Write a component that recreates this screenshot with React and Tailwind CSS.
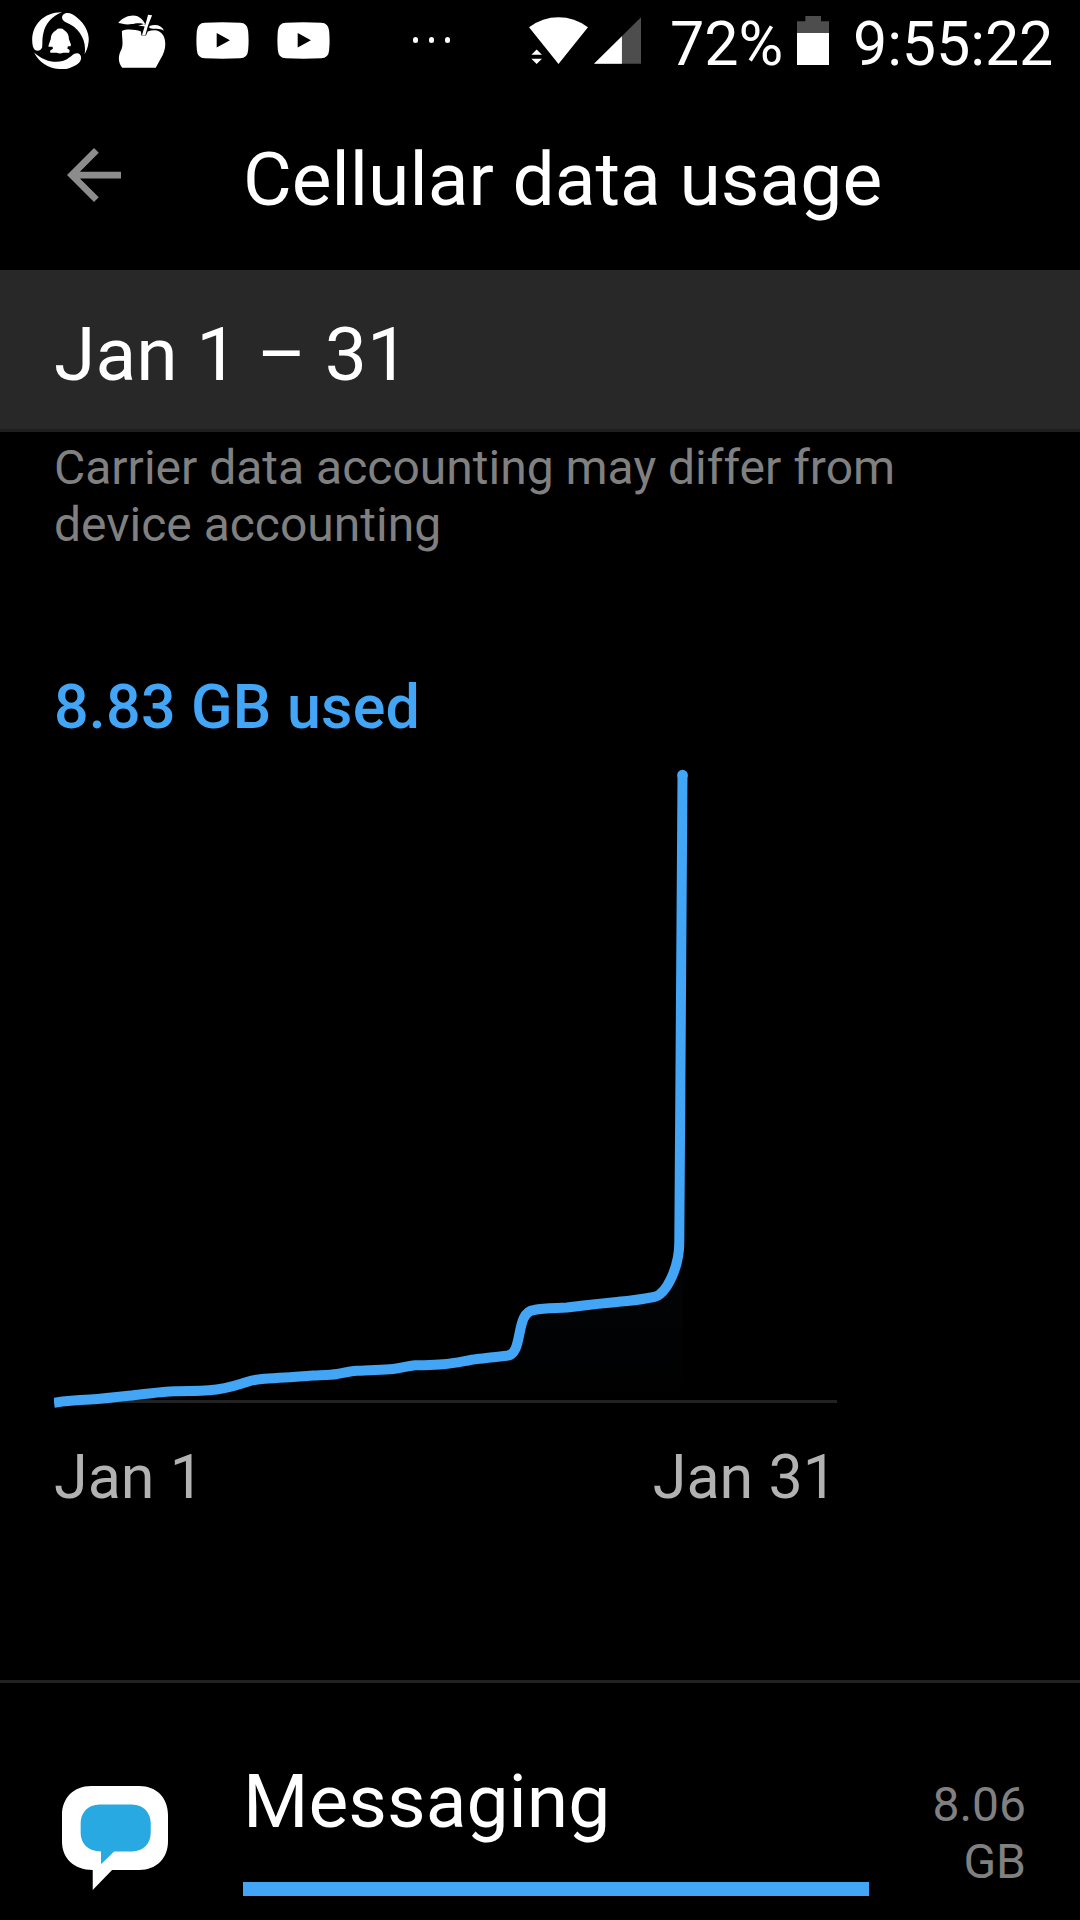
import clsx from 'clsx'

const APPS = [
  { name: 'Messaging', amount: '8.06', unit: 'GB', percent: 100 },
]

const LINE =
  'M54 1402.7 C65 1401 78 1400 90 1399.5 C107 1398.5 122 1396.5 140 1394.5 S162 1391.8 175 1391.3 S197 1391.3 209 1390.3 ' +
  'C221 1389.5 231 1387 242 1383.5 S252 1379.8 262 1379 S295 1377 313 1375.5 C325 1375 331 1375 337 1374 ' +
  'C345 1372.5 350 1371.3 357 1370.8 C370 1369.8 382 1370 393 1369 C402 1368 406 1366.2 415 1365.3 C424 1365 433 1365.3 443 1364.3 ' +
  'C455 1363.3 465 1360.8 477 1359 C487 1358 497 1356.6 507 1355.7 C524 1354.5 514.5 1312 534 1310 ' +
  'C545 1308 556 1308.3 567 1307.5 C587 1304.5 607 1303 627 1301 C636 1300 645 1298.8 654 1297 C666 1294.5 679.3 1268 679.3 1242 L682.5 775'

function RingBellIcon({ className }) {
  return (
    <svg viewBox="96 35 171 172" className={className} fill="currentColor">
      <path d="M186 36C133 35 97 72 96 118C96 134 99 145 104 149C111 155 123 151 126 142C128 131 125 119 130 98C136 70 156 47 186 36Z" />
      <path d="M191 42C202 33 218 40 232 52C259 74 270 104 266 127C264 142 260 153 254 162C262 122 238 82 199 67C186 62 182 50 191 42Z" />
      <path d="M102 157C124 178 158 191 188 183C205 178 213 168 222 162C236 154 247 166 243 178C240 191 222 200 202 206C160 213 119 193 102 157Z" />
      <path d="M169 89Q171 85 180 85Q190 85 192 89C202 95 207 104 207 117L213 133L212 138H204L202 145L209 150L208 158H190Q180 162 170 158H151L150 152L159 145L157 140H145L146 134L152 117C152 104 158 95 169 89Z" />
    </svg>
  )
}

function AppleIcon({ className }) {
  return (
    <svg viewBox="355 42 142 161" className={className} fill="currentColor">
      <path d="M355 69C372 48 403 40 420 53C428 59 433 65 436 74C420 66 407 70 395 72C378 75 365 70 355 69Z" />
      <path d="M444 44L456 46C452 58 446 70 442 83L436 105L426 105C431 87 439 67 444 44Z" />
      <path d="M432 72L441 82C430 77 422 78 414 78Z" />
      <path d="M448 78C467 71 485 76 492 92C477 84 463 89 448 84Z" />
      <path d="M366 93C380 86 404 88 423 94L424 106H438L443 94C465 86 482 91 490 107C499 127 497 151 482 175L467 202H367C353 184 355 165 365 147C371 131 366 114 366 93Z" />
    </svg>
  )
}

function VideoIcon({ className }) {
  return (
    <svg viewBox="588 65 159 112" className={className}>
      <path fill="#fff" d="M614 67Q667 64 721 67Q743 68 745 91Q748 121 745 151Q743 174 721 175Q667 178 614 175Q592 174 590 151Q587 121 590 91Q592 68 614 67Z" />
      <path d="M650 98L690 120L650 142Z" />
    </svg>
  )
}

function WifiIcon({ className }) {
  return (
    <svg viewBox="447 51 178 142" className={className} fill="currentColor">
      <path d="M447 82Q488 52 536 52Q584 52 625 82L536 193Z" />
      <path d="M454 165L470 149L486 165Z M454 177H486L470 193Z" />
    </svg>
  )
}

function SignalIcon({ className }) {
  return (
    <svg viewBox="641 50 143 142" className={className}>
      <path fill="#4d4d4d" d="M784 50V192H641Z" />
      <path fill="#fff" d="M726 108V192H641Z" />
    </svg>
  )
}

function BatteryIcon({ className }) {
  return (
    <svg viewBox="471 48 96 147" className={className}>
      <path fill="#4d4d4d" d="M496 48H543V64H567V100H471V64H496Z" />
      <path fill="#fff" d="M471 99H567V195H471Z" />
    </svg>
  )
}

function BackIcon({ className }) {
  return (
    <svg viewBox="4 4 16 16" className={className} fill="currentColor">
      <path d="M20 11H7.83l5.59-5.59L12 4l-8 8 8 8 1.41-1.41L7.83 13H20v-2z" />
    </svg>
  )
}

function MessagingIcon({ className }) {
  return (
    <svg viewBox="181 379 307 311" preserveAspectRatio="none" className={className}>
      <path fill="#fff" d="M265 379H405C455 379 488 415 488 465V545C488 595 455 630 405 630H326L270 690V630C215 630 181 595 181 545V465C181 415 215 379 265 379Z" />
      <path fill="#29a9e1" d="M290 434H383C418 434 438 460 438 490V519C438 550 418 575 383 575H332L294 613V575C255 575 235 550 235 519V490C235 460 255 434 290 434Z" />
    </svg>
  )
}

function StatusBar() {
  return (
    <div className="flex h-[88px] text-[61px] leading-[88px]">
      <RingBellIcon className="ml-8 mt-3 h-[57px] w-[57px] shrink-0" />
      <AppleIcon className="ml-[29px] mt-[14px] h-[54px] w-12 shrink-0" />
      <VideoIcon className="ml-[30px] mt-[22px] h-[37px] w-[53px] shrink-0" />
      <VideoIcon className="ml-7 mt-[22px] h-[37px] w-[53px] shrink-0" />
      <div className="ml-[83px] mt-[37px] flex h-[6px] shrink-0 gap-[11px]">
        {[0, 1, 2].map((i) => (
          <span key={i} className="h-[6px] w-[5px] rounded-full bg-white" />
        ))}
      </div>
      <WifiIcon className="ml-[79px] mt-[17px] h-[47px] w-[59px] shrink-0" />
      <SignalIcon className="ml-[6px] mt-[17px] h-[47px] w-[47px] shrink-0" />
      <span className="ml-[29px] w-[127px] shrink-0 whitespace-nowrap">72%</span>
      <BatteryIcon className="mt-4 h-[49px] w-8 shrink-0" />
      <span className="ml-6 whitespace-nowrap tracking-[-0.1px]">9:55:22</span>
    </div>
  )
}

function UsageChart() {
  return (
    <svg viewBox="54 760 783 660" className="ml-[54px] mt-[17px] block h-[660px] w-[783px]">
      <defs>
        <linearGradient id="area" x1="0" y1="1240" x2="0" y2="1400" gradientUnits="userSpaceOnUse">
          <stop offset="0" stopColor="#020609" />
          <stop offset="1" stopColor="#000" />
        </linearGradient>
      </defs>
      <path d={`${LINE} V1400 H54 Z`} fill="url(#area)" />
      <rect x="54" y="1400" width="783" height="3" fill="#222" />
      <path d={LINE} fill="none" stroke="#42a5f5" strokeWidth="10" strokeLinejoin="round" />
      <circle cx="682.5" cy="775" r="5.3" fill="#42a5f5" />
    </svg>
  )
}

function AppRow({ app, first }) {
  return (
    <div className={clsx('flex h-[237px]', first && 'border-t-[3px] border-[#222]')}>
      <MessagingIcon className="ml-[62px] mt-[103px] h-[104px] w-[106px] shrink-0" />
      <div className="ml-[75px] w-[626px] shrink-0">
        <div className="mt-[74px] text-[75px] leading-[88px]">{app.name}</div>
        <div className="mt-[37px] h-[14px]">
          <div className="h-full bg-[#42a5f5]" style={{ width: `${app.percent}%` }} />
        </div>
      </div>
      <div className="mr-[54px] mt-[93px] flex-1 text-right text-[48px] leading-[57px] text-[#808080]">
        <div>{app.amount}</div>
        <div>{app.unit}</div>
      </div>
    </div>
  )
}

export default function App() {
  return (
    <div className="h-[1920px] w-[1080px] overflow-hidden bg-black font-['Roboto',sans-serif] text-white">
      <StatusBar />

      <header className="flex h-[182px] items-center">
        <BackIcon className="mb-2 ml-[67px] h-[54px] w-[54px] text-[#8c8c8c]" />
        <h1 className="ml-[122px] text-[75px] leading-[88px]">Cellular data usage</h1>
      </header>

      {/* Billing cycle */}
      <div className="h-[162px] border-b-[3px] border-[#1f1f1f] bg-[#282828] pl-[54px] pt-[40px] text-[75px] leading-[88px]">
        Jan 1 – 31
      </div>

      <p className="ml-[54px] mt-[7px] w-[900px] text-[48px] leading-[57px] text-[#808080]">
        Carrier data accounting may differ from device accounting
      </p>

      <div className="ml-[54px] mt-[118px] text-[61px] font-medium leading-[72px] tracking-[0.2px] text-[#42a5f5]">
        8.83 GB used
      </div>

      <UsageChart />

      <div className="ml-[54px] mt-[21px] flex w-[783px] justify-between text-[61px] leading-[72px] text-[#b2b2b2]">
        <span>Jan 1</span>
        <span>Jan 31</span>
      </div>

      <div className="mt-[167px]">
        {APPS.map((app, i) => (
          <AppRow key={app.name} app={app} first={i === 0} />
        ))}
      </div>
    </div>
  )
}
